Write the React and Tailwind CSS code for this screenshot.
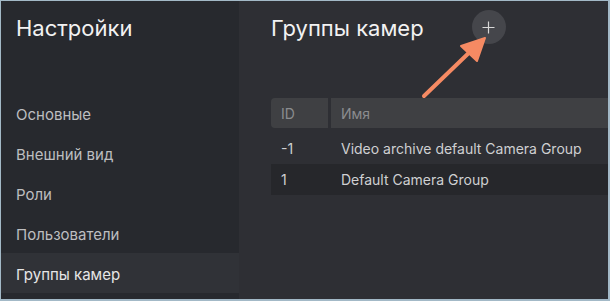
const menu = ['Основные', 'Внешний вид', 'Роли', 'Пользователи', 'Группы камер'];

const rows = [
  { id: '-1', name: 'Video archive default Camera Group' },
  { id: '1', name: 'Default Camera Group' },
];

const App = () => {
  return (
    <div className="w-[610px] h-[301px] border border-[#a3b9c7] border-r-2 border-b-2 flex overflow-hidden font-['Inter',sans-serif] bg-[#2e2f34]">
      {/* sidebar */}
      <div className="w-[238px] shrink-0 bg-[#27292e] flex flex-col">
        <h1 className="h-[92px] pl-[15px] pt-[12px] text-[22px] leading-[30px] text-[#f2f2f2] font-normal">
          Настройки
        </h1>
        {menu.map((item, i) => (
          <div
            key={item}
            className={`h-10 pl-[15px] pt-[4px] flex items-center text-[15px] ${i === menu.length - 1 ? 'bg-[#303237] text-[#e6e6e6]' : 'text-[#bdbec0]'}`}
          >
            {item}
          </div>
        ))}
      </div>

      {/* main */}
      <div className="flex-1 pl-[32px] flex flex-col">
        <div className="h-[97px] pt-[12px] relative">
          <div className="flex items-start">
            <h2 className="text-[22px] leading-[30px] text-[#f2f2f2] font-normal">Группы камер</h2>
            <button className="ml-[48px] -mt-[3px] w-[34px] h-[34px] rounded-full bg-[#45464b] flex items-center justify-center">
              <svg width="13" height="13" viewBox="0 0 13 13" stroke="#d8d8d8" strokeWidth="1.2">
                <path d="M6.5 0.5v12M0.5 6.5h12" />
              </svg>
            </button>
          </div>
          <svg className="absolute left-[148px] top-[30px]" width="80" height="70" viewBox="0 0 80 70">
            <path d="M5 65L56 16" stroke="#f58a63" strokeWidth="4" strokeLinecap="round" />
            <path d="M66 7L42 15L58 30Z" fill="#f58a63" stroke="#f58a63" strokeWidth="2" strokeLinejoin="round" />
          </svg>
        </div>

        <div className="flex gap-[3px] h-[30px] text-[14px] text-[#8b8c8f]">
          <div className="w-[57px] rounded-l-[4px] bg-[#3f4043] pl-[10px] flex items-center">ID</div>
          <div className="flex-1 bg-[#3f4043] pl-[10px] flex items-center">Имя</div>
        </div>
        <div className="mt-[5px] text-[14px] text-[#cfd0d2]">
          {rows.map((r, i) => (
            <div key={r.id} className={`flex h-[31px] items-center ${i % 2 === 1 ? 'bg-[#26272b]' : ''}`}>
              <div className="w-[60px] pl-[10px]">{r.id}</div>
              <div className="flex-1 pl-[10px]">{r.name}</div>
            </div>
          ))}
        </div>
      </div>
    </div>
  );
};

export default App;
